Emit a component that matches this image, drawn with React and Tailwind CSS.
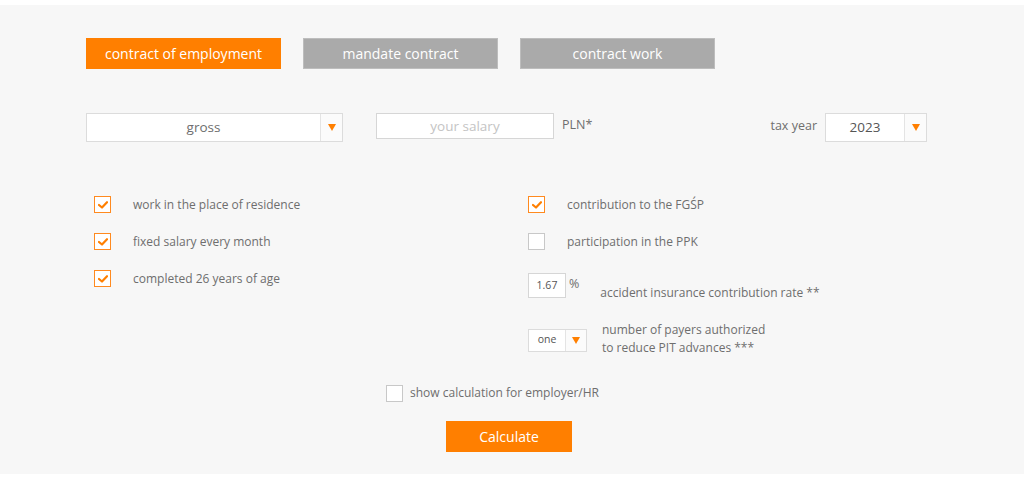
import React from "react";

const font = { fontFamily: '"Open Sans", "Liberation Sans", sans-serif' };

function Check({ checked }) {
  return (
    <div
      className={`w-[17px] h-[17px] border flex items-center justify-center shrink-0 ${
        checked ? "border-[#ff8a1f] bg-white" : "border-[#c8c8c8] bg-white"
      }`}
    >
      {checked && (
        <svg width="10" height="8" viewBox="0 0 10 8">
          <path d="M1 4 L4 6.5 L9 1.2" fill="none" stroke="#ff7f00" strokeWidth="2.2" strokeLinecap="round" strokeLinejoin="round" />
        </svg>
      )}
    </div>
  );
}

function Arrow() {
  return (
    <svg width="8" height="7" viewBox="0 0 8 7">
      <path d="M0 0 H8 L4 7 Z" fill="#ff7f00" />
    </svg>
  );
}

function CheckRow({ checked, label }) {
  return (
    <div className="flex items-center h-[17px]">
      <Check checked={checked} />
      <span className="ml-[22px] text-[12px] text-[#6e6e6e]">{label}</span>
    </div>
  );
}

export default function App() {
  return (
    <div className="w-[1024px] h-[491px] bg-white pt-[5px]" style={font}>
      <div className="bg-[#f7f7f7] h-[469px] pt-[33px]">
        {/* tabs */}
        <div className="flex gap-[22px] pl-[86px]">
          <div className="w-[195px] h-[31px] bg-[#ff7f00] text-white text-[14px] flex items-center justify-center">
            contract of employment
          </div>
          <div className="w-[195px] h-[31px] bg-[#aaaaaa] text-white text-[14px] flex items-center justify-center border border-[#bdbdbd]">
            mandate contract
          </div>
          <div className="w-[195px] h-[31px] bg-[#aaaaaa] text-white text-[14px] flex items-center justify-center border border-[#bdbdbd]">
            contract work
          </div>
        </div>

        {/* second row */}
        <div className="flex items-start mt-[44px] pl-[86px]">
          <div className="w-[257px] h-[29px] bg-white border border-[#dcdcdc] flex">
            <div className="flex-1 flex items-center justify-center text-[13.5px] text-[#6e6e6e]">gross</div>
            <div className="w-[22px] border-l border-[#e4e4e4] bg-[#fbfbfb] flex items-center justify-center">
              <Arrow />
            </div>
          </div>
          <div className="ml-[33px] w-[178px] h-[26px] bg-white border border-[#d6d6d6] flex items-center justify-center text-[13.5px] text-[#c4c4c4]">
            your salary
          </div>
          <div className="ml-[8px] mt-[3px] text-[12.5px] text-[#6e6e6e]">PLN*</div>
          <div className="ml-auto mr-[97px] flex items-center">
            <span className="text-[12.5px] text-[#6e6e6e] mr-[8px] -mt-[2px]">tax year</span>
            <div className="w-[102px] h-[29px] bg-white border border-[#dcdcdc] flex">
              <div className="flex-1 flex items-center justify-center text-[13.5px] text-[#555]">2023</div>
              <div className="w-[22px] border-l border-[#e4e4e4] bg-[#fbfbfb] flex items-center justify-center">
                <Arrow />
              </div>
            </div>
          </div>
        </div>

        {/* options */}
        <div className="flex mt-[54px]">
          <div className="w-[528px] pl-[94px] flex flex-col gap-[20px]">
            <CheckRow checked label="work in the place of residence" />
            <CheckRow checked label="fixed salary every month" />
            <CheckRow checked label="completed 26 years of age" />
          </div>
          <div className="flex flex-col">
            <div className="flex flex-col gap-[20px]">
              <CheckRow checked label="contribution to the FGŚP" />
              <CheckRow checked={false} label="participation in the PPK" />
            </div>
            <div className="flex items-start mt-[23px]">
              <div className="w-[38px] h-[25px] bg-white border border-[#d6d6d6] flex items-center justify-center text-[10.5px] text-[#555]">
                1.67
              </div>
              <span className="ml-[3px] mt-[2px] text-[12.5px] text-[#6e6e6e]">%</span>
              <span className="ml-[21px] mt-[11px] text-[12px] text-[#6e6e6e]">accident insurance contribution rate **</span>
            </div>
            <div className="flex items-center mt-[21px]">
              <div className="w-[59px] h-[23px] bg-white border border-[#dcdcdc] flex">
                <div className="flex-1 flex items-center justify-center text-[10.5px] text-[#555]">one</div>
                <div className="w-[21px] border-l border-[#e4e4e4] bg-[#fbfbfb] flex items-center justify-center">
                  <Arrow />
                </div>
              </div>
              <div className="ml-[15px] text-[12px] leading-[18px] text-[#6e6e6e] -mt-[2px]">
                number of payers authorized
                <br />
                to reduce PIT advances ***
              </div>
            </div>
          </div>
        </div>

        {/* employer */}
        <div className="flex items-center mt-[27px] pl-[386px]">
          <Check checked={false} />
          <span className="ml-[7px] text-[12px] text-[#6e6e6e]">show calculation for employer/HR</span>
        </div>

        <div className="flex mt-[19px] pl-[446px]">
          <div className="w-[126px] h-[31px] bg-[#ff7f00] text-white text-[14px] flex items-center justify-center">
            Calculate
          </div>
        </div>
      </div>
    </div>
  );
}
